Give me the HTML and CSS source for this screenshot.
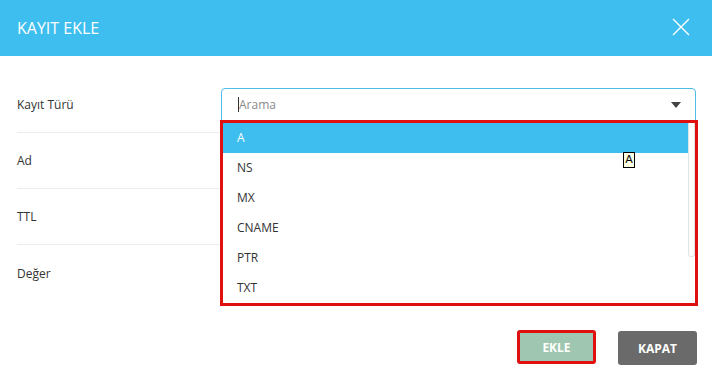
FILE: index.html
```html
<!DOCTYPE html>
<html lang="tr">
<head>
    <meta charset="UTF-8">
    <meta name="viewport" content="width=device-width, initial-scale=1.0">
    <title>Kayıt Ekle</title>
    <link rel="stylesheet" href="styles.css">
</head>
<body>

    <div class="modal">
        <div class="modal-header">
            <span class="modal-title">KAYIT EKLE</span>
            <svg class="close" width="18" height="18" viewBox="0 0 18 18">
                <path d="M1 1 L17 17 M17 1 L1 17" stroke="#fff" stroke-width="1.4" fill="none"/>
            </svg>
        </div>

        <div class="modal-body">
            <div class="form-row">
                <label class="form-label">Kayıt Türü</label>
                <div class="select-wrap">
                    <div class="select-box">
                        <span class="caret-line"></span>
                        <span class="placeholder">Arama</span>
                        <span class="arrow"></span>
                    </div>
                    <div class="dropdown">
                        <ul class="options">
                            <li class="selected">A</li>
                            <li>NS</li>
                            <li>MX</li>
                            <li>CNAME</li>
                            <li>PTR</li>
                            <li>TXT</li>
                        </ul>
                        <div class="scroll-thumb"></div>
                        <div class="tooltip">A</div>
                    </div>
                </div>
            </div>
            <div class="form-row">
                <label class="form-label">Ad</label>
            </div>
            <div class="form-row">
                <label class="form-label">TTL</label>
            </div>
            <div class="form-row last">
                <label class="form-label">Değer</label>
            </div>
        </div>

        <div class="modal-footer">
            <button class="btn btn-ekle">EKLE</button>
            <button class="btn btn-kapat">KAPAT</button>
        </div>
    </div>

</body>
</html>
```

FILE: styles.css
```css
body {
    margin: 0;
    background: #fff;
    font-family: "Open Sans", Arial, sans-serif;
    color: #333;
}

.modal {
    width: 712px;
    height: 373px;
    position: relative;
}

.modal-header {
    background: #3dbeee;
    height: 56px;
    padding: 0 22px 0 17px;
    display: flex;
    align-items: center;
    justify-content: space-between;
    box-sizing: border-box;
}

.modal-title {
    color: #fff;
    font-size: 16px;
    margin-top: -1px;
}

.close {
    margin-top: -2px;
}

.modal-body {
    padding: 21px 16px 0 17px;
}

.form-row {
    display: flex;
    align-items: center;
    height: 56px;
    border-bottom: 1px solid #ececec;
    box-sizing: border-box;
}

.form-row.last {
    border-bottom: none;
}

.form-label {
    width: 204px;
    font-size: 12px;
    color: #333;
}

.select-wrap {
    flex: 1;
    position: relative;
}

.select-box {
    height: 34px;
    border: 1px solid #4cbde6;
    border-radius: 4px 4px 0 0;
    display: flex;
    align-items: center;
    padding: 0 14px 0 16px;
    box-sizing: border-box;
}

.caret-line {
    width: 1px;
    height: 15px;
    background: #333;
}

.placeholder {
    font-size: 12px;
    color: #8a8a8a;
    flex: 1;
}

.arrow {
    width: 0;
    height: 0;
    border-left: 5px solid transparent;
    border-right: 5px solid transparent;
    border-top: 6px solid #444;
}

.dropdown {
    position: absolute;
    top: 32px;
    left: -1px;
    right: -2px;
    border: 3px solid #e01010;
    background: #fff;
    z-index: 2;
}

.options {
    list-style: none;
    margin: 0;
    padding: 0 6px 0 0;
}

.options li {
    height: 30px;
    line-height: 30px;
    padding-left: 14px;
    font-size: 12px;
    color: #333;
}

.options li.selected {
    background: #3dbeee;
    color: #fff;
}

.scroll-thumb {
    position: absolute;
    top: 0;
    right: 0;
    width: 5px;
    height: 133px;
    border: 1px solid #e2e2e2;
    border-top: none;
    border-radius: 0 0 3px 3px;
}

.tooltip {
    position: absolute;
    top: 29px;
    left: 400px;
    width: 10px;
    height: 14px;
    border: 1px solid #000;
    background: #ffffe6;
    font-family: "DejaVu Sans", sans-serif;
    font-size: 11px;
    line-height: 14px;
    text-align: center;
    color: #000;
}

.modal-footer {
    display: flex;
    justify-content: flex-end;
    gap: 22px;
    padding: 29px 15px 0 0;
}

.btn {
    height: 34px;
    border: none;
    border-radius: 3px;
    color: #fff;
    font-family: "Open Sans", Arial, sans-serif;
    font-weight: bold;
    font-size: 12px;
    cursor: pointer;
}

.btn-ekle {
    width: 79px;
    background: #9ec6b0;
    border: 3px solid #e01010;
}

.btn-kapat {
    width: 79px;
    background: #6a6a6a;
    margin-top: 1px;
}
```
